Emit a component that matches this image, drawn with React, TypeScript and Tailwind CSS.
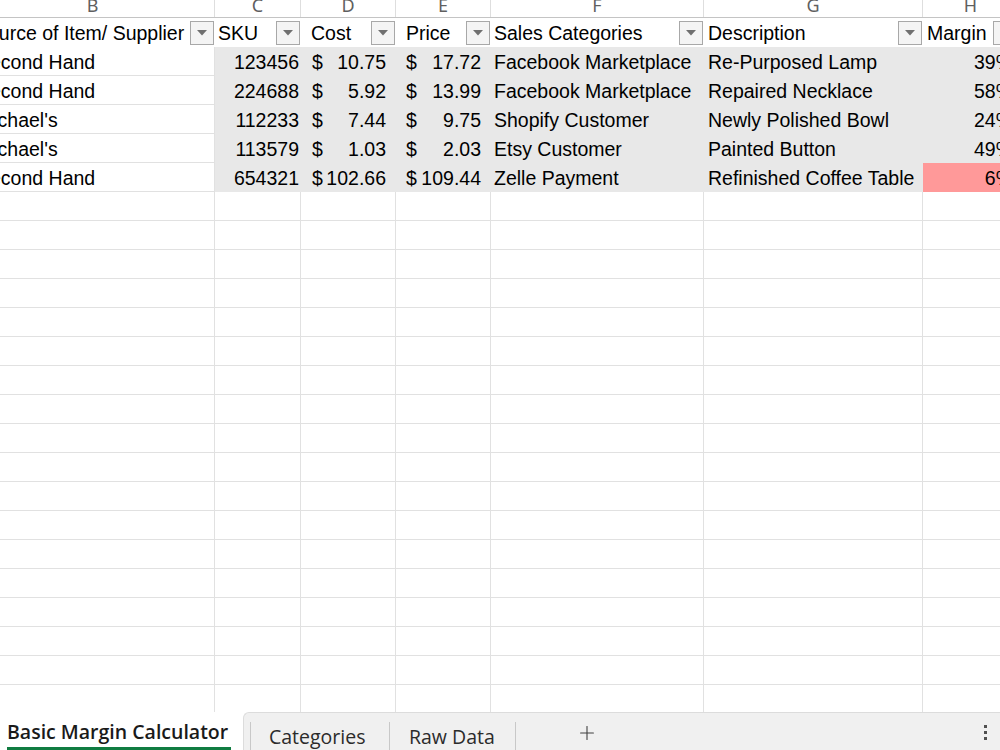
import { Plus } from "lucide-react";

const cols = [
    { key: "B", w: "w-[215px]", letter: "B", pad: "pr-[29px]" },
    { key: "C", w: "w-[86px]", letter: "C", pad: "" },
    { key: "D", w: "w-[95px]", letter: "D", pad: "" },
    { key: "E", w: "w-[95px]", letter: "E", pad: "" },
    { key: "F", w: "w-[213px]", letter: "F", pad: "" },
    { key: "G", w: "w-[219px]", letter: "G", pad: "" },
    { key: "H", w: "w-[96px]", letter: "H", pad: "" },
];

const rows = [
    { source: "Second Hand", sku: "123456", cost: "10.75", price: "17.72", cat: "Facebook Marketplace", desc: "Re-Purposed Lamp", margin: "39%", low: false },
    { source: "Second Hand", sku: "224688", cost: "5.92", price: "13.99", cat: "Facebook Marketplace", desc: "Repaired Necklace", margin: "58%", low: false },
    { source: "Michael's", sku: "112233", cost: "7.44", price: "9.75", cat: "Shopify Customer", desc: "Newly Polished Bowl", margin: "24%", low: false },
    { source: "Michael's", sku: "113579", cost: "1.03", price: "2.03", cat: "Etsy Customer", desc: "Painted Button", margin: "49%", low: false },
    { source: "Second Hand", sku: "654321", cost: "102.66", price: "109.44", cat: "Zelle Payment", desc: "Refinished Coffee Table", margin: "6%", low: true },
];

function FilterButton() {
    return (
        <div className="w-[24px] h-[24px] shrink-0 border border-[#a8a8a8] bg-[#f4f4f4] flex items-center justify-center mr-[1px]">
            <svg width="10" height="6" viewBox="0 0 10 6">
                <path d="M0 0 L10 0 L5 5.5 Z" fill="#707070" />
            </svg>
        </div>
    );
}

function HeaderCell({ w, label, pad = "pl-[3px]" }: { w: string; label: string; pad?: string }) {
    return (
        <div className={`${w} shrink-0 h-full flex items-center justify-between bg-white overflow-hidden`}>
            <span className={`${pad} pt-[2px] whitespace-nowrap`}>{label}</span>
            <FilterButton />
        </div>
    );
}

export default function App() {
    return (
        <div className="w-[1000px] h-[750px] overflow-hidden bg-white flex flex-col font-['Liberation_Sans',Arial,sans-serif] text-[19.5px] text-black">
            {/* Column letters */}
            <div className="h-[18px] shrink-0 flex border-b border-[#c4c4c4] overflow-hidden">
                {cols.map((c) => (
                    <div key={c.key} className={`${c.w} ${c.pad} shrink-0 h-full border-r border-[#dedede] flex justify-center overflow-hidden`}>
                        <span className="text-[18px] leading-none mt-[-4px] text-[#5f5f5f] font-['Noto_Sans',sans-serif]">{c.letter}</span>
                    </div>
                ))}
            </div>

            <div className="flex-1 overflow-hidden flex flex-col">
                {/* Table header */}
                <div className="h-[29px] shrink-0 flex">
                    <div className="w-[215px] shrink-0 h-full flex items-center justify-between overflow-hidden">
                        <span className="ml-[-25px] pt-[2px] whitespace-nowrap">Source of Item/ Supplier</span>
                        <FilterButton />
                    </div>
                    <HeaderCell w="w-[86px]" label="SKU" />
                    <HeaderCell w="w-[95px]" label="Cost" pad="pl-[10px]" />
                    <HeaderCell w="w-[95px]" label="Price" pad="pl-[10px]" />
                    <HeaderCell w="w-[213px]" label="Sales Categories" />
                    <HeaderCell w="w-[219px]" label="Description" pad="pl-[4px]" />
                    <div className="w-[96px] shrink-0 h-full flex items-center gap-[6px] overflow-hidden">
                        <span className="pl-[4px] pt-[2px]">Margin</span>
                        <FilterButton />
                    </div>
                </div>

                {/* Data rows */}
                {rows.map((r, i) => (
                    <div key={i} className="h-[29px] shrink-0 flex">
                        <div className="w-[215px] shrink-0 h-full flex items-center pt-[3px] border-b border-r border-[#e1e1e1] overflow-hidden">
                            <span className="ml-[-23px] whitespace-nowrap">{r.source}</span>
                        </div>
                        <div className="w-[86px] shrink-0 h-full flex items-center justify-end pt-[2px] pr-[2px] bg-[#e8e8e8]">{r.sku}</div>
                        <div className="w-[95px] shrink-0 h-full flex items-center justify-between pt-[2px] pl-[11px] pr-[10px] bg-[#e8e8e8]">
                            <span>$</span>
                            <span>{r.cost}</span>
                        </div>
                        <div className="w-[95px] shrink-0 h-full flex items-center justify-between pt-[2px] pl-[10px] pr-[10px] bg-[#e8e8e8]">
                            <span>$</span>
                            <span>{r.price}</span>
                        </div>
                        <div className="w-[213px] shrink-0 h-full flex items-center pt-[2px] pl-[3px] bg-[#e8e8e8] whitespace-nowrap overflow-hidden">{r.cat}</div>
                        <div className="w-[219px] shrink-0 h-full flex items-center pt-[2px] pl-[4px] bg-[#e8e8e8] whitespace-nowrap overflow-hidden">{r.desc}</div>
                        <div className={`w-[96px] shrink-0 h-full flex items-center justify-end pt-[2px] pr-[6px] ${r.low ? "bg-[#ff9999]" : "bg-[#e8e8e8]"}`}>{r.margin}</div>
                    </div>
                ))}

                {/* Empty grid */}
                {Array.from({ length: 18 }).map((_, i) => (
                    <div key={i} className="h-[29px] shrink-0 flex">
                        {cols.map((c) => (
                            <div key={c.key} className={`${c.w} shrink-0 h-full border-b border-r border-[#e1e1e1]`} />
                        ))}
                    </div>
                ))}
            </div>

            {/* Sheet tabs */}
            <div className="h-[38px] shrink-0 flex font-['Open_Sans',sans-serif]">
                <div className="w-[243px] shrink-0 h-full bg-white flex flex-col justify-end">
                    <span className="ml-[7px] text-[19.5px] font-semibold text-[#1a1a1a] leading-none mb-[6px] whitespace-nowrap">Basic Margin Calculator</span>
                    <div className="ml-[7px] w-[224px] h-[3px] bg-[#107c41]" />
                </div>
                <div className="flex-1 h-full bg-[#f0f0f0] rounded-tl-[6px] border-t border-l border-[#dcdcdc] flex items-end overflow-hidden">
                    <div className="w-[7px] h-[28px] border-r border-[#c8c8c8]" />
                    <div className="w-[138px] h-full flex items-end">
                        <span className="ml-[18px] mb-[-2px] text-[19.5px] text-[#2b2b2b] leading-[30px]">Categories</span>
                    </div>
                    <div className="w-[1px] h-[28px] bg-[#c8c8c8]" />
                    <div className="w-[125px] h-full flex items-end">
                        <span className="ml-[19px] mb-[-2px] text-[19.5px] text-[#2b2b2b] leading-[30px]">Raw Data</span>
                    </div>
                    <div className="w-[1px] h-[28px] bg-[#c8c8c8]" />
                    <div className="w-[82px] h-full flex items-center justify-end pt-[2px]">
                        <Plus className="w-[22px] h-[22px] text-[#404040]" strokeWidth={1.2} />
                    </div>
                    <div className="flex-1" />
                    <div className="w-[3px] h-full flex flex-col justify-center gap-[3px] mr-[13px] pt-[2px]">
                        <div className="w-[3px] h-[3px] bg-[#505050]" />
                        <div className="w-[3px] h-[3px] bg-[#505050]" />
                        <div className="w-[3px] h-[3px] bg-[#505050]" />
                    </div>
                </div>
            </div>
        </div>
    );
}
